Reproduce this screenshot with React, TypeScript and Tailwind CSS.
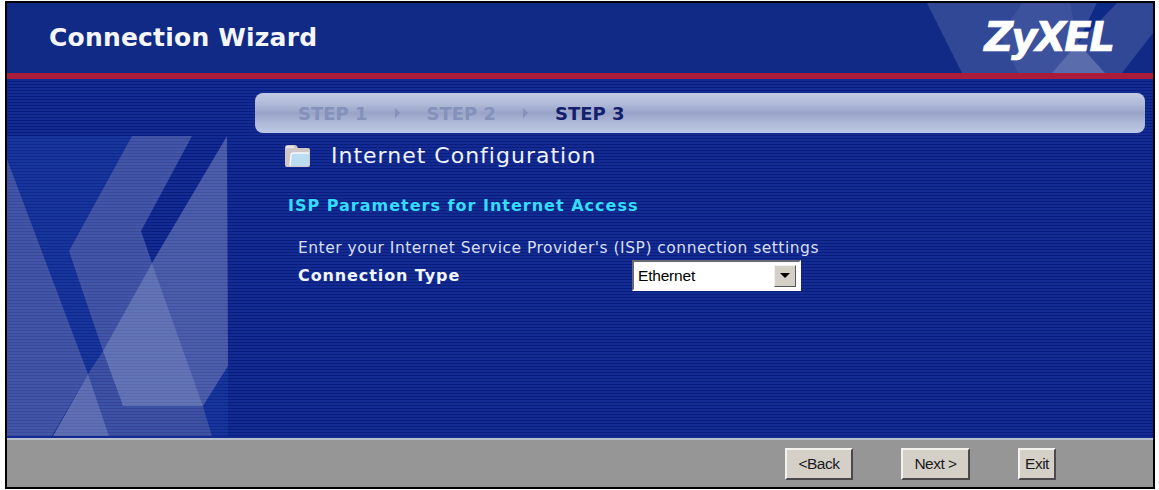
const dejavu = "font-['DejaVu_Sans',sans-serif]";
const arial = "font-['Liberation_Sans',Arial,sans-serif]";

const HeaderGraphic = () => (
  <svg className="absolute inset-0" width="1146" height="70" viewBox="7 3 1146 70">
    <polygon points="927,3 1097,3 1078,43 1105,73 962,73" fill="#ffffff" fillOpacity="0.14" />
    <polygon points="1022,3 1070,3 1078,43 1052,73 1018,73 1000,36" fill="#ffffff" fillOpacity="0.06" />
    <polygon points="1078,43 1105,73 1052,73" fill="#ffffff" fillOpacity="0.2" />
    <polygon points="1097,3 1117,3 1078,43" fill="#0c2a86" />
    <polygon points="1117,3 1153,3 1153,33 1122,73 1105,73 1078,43" fill="#ffffff" fillOpacity="0.14" />
  </svg>
);

const SideGraphic = () => (
  <svg className="shrink-0" width="221" height="358" viewBox="7 80 221 358">
    <polygon points="7,137 132,137 69,252 103,352 88,375 7,160" fill="#2a5ac0" fillOpacity="0.22" />
    <polygon points="132,137 192,137 141,232 152,264 103,352 69,252" fill="#ffffff" fillOpacity="0.2" />
    <polygon points="227,137 228,367 203,407 152,264" fill="#ffffff" fillOpacity="0.24" />
    <polygon points="7,160 88,375 52,437 7,437" fill="#ffffff" fillOpacity="0.2" />
    <polygon points="152,264 203,407 123,407 103,352" fill="#ffffff" fillOpacity="0.34" />
    <polygon points="88,375 103,352 123,407 203,407 212,437 109,437" fill="#ffffff" fillOpacity="0.18" />
    <polygon points="88,375 109,437 53,437" fill="#ffffff" fillOpacity="0.32" />
    <polygon points="203,407 228,367 228,437 212,437" fill="#2a5ac0" fillOpacity="0.22" />
  </svg>
);

const FolderIcon = () => (
  <svg width="27" height="24" viewBox="0 0 27 24" className="shrink-0">
    <path d="M1 4 Q1 1 4 1 H11 Q13 1 14 4 H24 Q26 4 26 6 V21 Q26 23 24 23 H3 Q1 23 1 21 Z" fill="#cfc8c6" />
    <path d="M6 22 L7 11 Q7 9 10 9 H25 V20 Q25 22 23 22 Z" fill="#bcdcf2" />
    <path d="M6 22 L7 11 Q7 9 10 9 H25" fill="none" stroke="#f4f8fc" strokeWidth="1.5" />
    <path d="M2 3 H10" stroke="#f2efec" strokeWidth="1.5" />
  </svg>
);

const Arrow = () => (
  <span className="w-0 h-0 border-y-[5px] border-y-transparent border-l-[5px] border-l-[#8491ba]" />
);

const WizardButton = ({ label, width }: { label: string; width: string }) => (
  <button
    className={`${width} h-[32px] bg-[#d4d0c8] text-[#1a1a1a] text-[15.5px] tracking-[-0.5px] ${arial} border-t-2 border-l-2 border-t-[#f4f2ee] border-l-[#f4f2ee] border-b-2 border-r-2 border-b-[#4a4a4a] border-r-[#4a4a4a]`}
  >
    {label}
  </button>
);

const App = () => {
  return (
    <div className="w-[1159px] h-[490px] bg-white pl-[5px] pr-[4px] pt-px pb-px overflow-hidden">
      <div className="h-full border-2 border-black flex flex-col">
        <div className="relative h-[70px] shrink-0 bg-[#102a85] flex items-center justify-between pl-[42px] pr-[40px] overflow-hidden">
          <HeaderGraphic />
          <h1 className={`relative text-[25px] tracking-[0.2px] font-bold text-[#f4f6fb] ${dejavu}`}>Connection Wizard</h1>
          <span className={`relative text-[40px] font-bold italic text-white tracking-[-2px] mt-[-2px] [-webkit-text-stroke:0.7px_white] ${dejavu}`}>ZyXEL</span>
        </div>
        <div className="h-[6px] shrink-0 bg-[#ab1c3a]" />
        <div className="flex-1 flex min-h-0 bg-[repeating-linear-gradient(180deg,#122c94_0,#122c94_2px,#0a1c7c_2px,#0a1c7c_3px)]">
          <SideGraphic />
          <div className={`flex-1 flex flex-col pt-[14px] pl-[27px] pr-[8px] ${dejavu}`}>
            <div className="h-[40px] rounded-[8px] flex items-center gap-[27px] pl-[43px] text-[18px] font-bold bg-[linear-gradient(180deg,#c2cae2_0%,#b2bcda_25%,#98a3c8_50%,#aeb9d8_75%,#bdc8e4_100%)]">
              <span className="text-[#8491ba]">STEP 1</span>
              <Arrow />
              <span className="text-[#8491ba]">STEP 2</span>
              <Arrow />
              <span className="text-[#14206e]">STEP 3</span>
            </div>
            <div className="flex items-center gap-[20px] mt-[11px] ml-[29px] h-[24px]">
              <FolderIcon />
              <h2 className="text-[22px] tracking-[1px] text-[#eef2fb] mt-[-2px]">Internet Configuration</h2>
            </div>
            <h3 className="mt-[28px] ml-[33px] text-[16px] tracking-[1px] leading-[20px] font-bold text-[#35dcfc]">ISP Parameters for Internet Access</h3>
            <p className="mt-[22px] ml-[43px] text-[15.5px] tracking-[0.5px] leading-[20px] text-[#d8dff0]">Enter your Internet Service Provider's (ISP) connection settings</p>
            <div className="flex items-center mt-[2px] ml-[43px]">
              <span className="w-[334px] text-[16px] tracking-[0.9px] font-bold text-[#f0f4fc]">Connection Type</span>
              <div className="w-[169px] h-[31px] bg-white border-2 border-t-[#6a6a72] border-l-[#6a6a72] border-r-white border-b-white flex items-center justify-between pl-[4px] pr-[3px]">
                <span className={`text-[15.5px] tracking-[-0.2px] text-black ${arial}`}>Ethernet</span>
                <div className="w-[22px] h-[22px] bg-[#d4d0c8] flex items-center justify-center border border-t-[#f4f2ee] border-l-[#f4f2ee] border-b-[#555] border-r-[#555]">
                  <span className="w-0 h-0 border-x-[5px] border-x-transparent border-t-[5px] border-t-black" />
                </div>
              </div>
            </div>
          </div>
        </div>
        <div className="h-[49px] shrink-0 bg-[#969696] border-t-2 border-t-[#b9c0cc] flex items-center justify-end gap-[48px] pr-[97px]">
          <WizardButton label="<Back" width="w-[68px]" />
          <WizardButton label="Next >" width="w-[69px]" />
          <WizardButton label="Exit" width="w-[38px]" />
        </div>
      </div>
    </div>
  );
};

export default App;
